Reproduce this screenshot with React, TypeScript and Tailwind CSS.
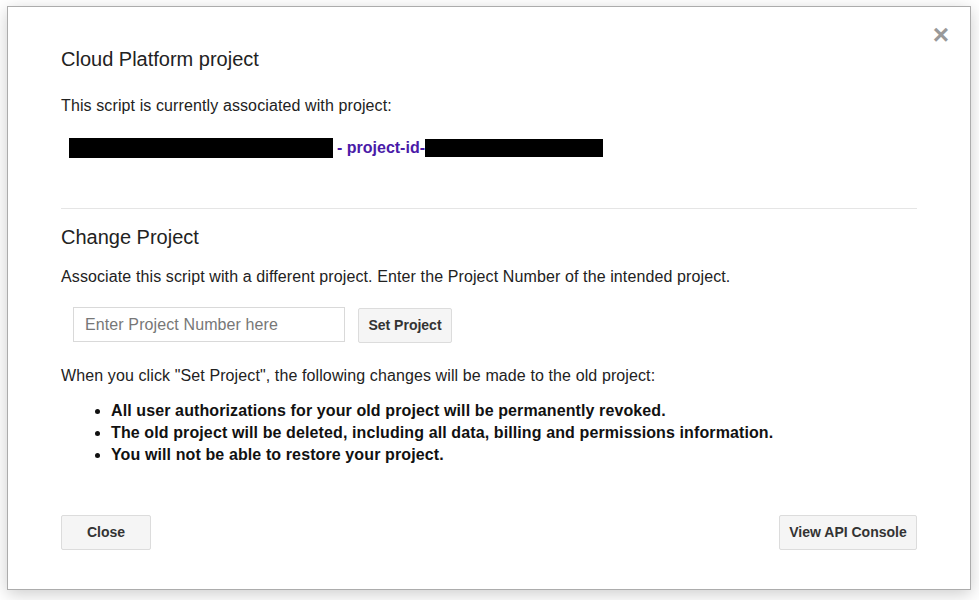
import React from "react";

const bullets = [
  "All user authorizations for your old project will be permanently revoked.",
  "The old project will be deleted, including all data, billing and permissions information.",
  "You will not be able to restore your project.",
];

const App: React.FC = () => {
  return (
    <div className="min-h-[600px] bg-white pl-[7px] pt-[6px] font-['Liberation_Sans',Arial,sans-serif] text-[#222]">
      <div className="relative h-[584px] w-[964px] border border-[#acacac] bg-white px-[53px] pt-[40px] shadow-[0_4px_16px_rgba(0,0,0,0.2)]">
        {/* close icon */}
        <button className="absolute right-[21px] top-[14px] text-[28px] leading-[28px] font-bold text-[#999]">
          ×
        </button>

        <h2 className="text-[20px] leading-[24px]">Cloud Platform project</h2>
        <p className="mt-[25px] text-[16px] leading-[20px] tracking-[0.11px]">This script is currently associated with project:</p>
        <div className="mt-[22px] ml-[8px] flex items-center">
          <span className="h-[20px] w-[264px] bg-black" />
          <span className="pl-[4px] text-[16px] leading-[20px] font-bold text-[#4a1aa8]">- project-id-</span>
          <span className="h-[18px] w-[178px] bg-black" />
        </div>

        <div className="mt-[50px] border-t border-[#e5e5e5]" />

        <h2 className="mt-[16px] text-[20px] leading-[24px]">Change Project</h2>
        <p className="mt-[18px] text-[16px] leading-[20px] tracking-[0.11px]">
          Associate this script with a different project. Enter the Project Number of the intended project.
        </p>
        <div className="mt-[20px] ml-[12px] flex items-start gap-[13px]">
          <input
            className="h-[35px] w-[272px] border border-[#d9d9d9] px-[11px] text-[16px] tracking-[0.11px] text-[#222] placeholder:text-[#777] outline-none"
            placeholder="Enter Project Number here"
          />
          <button className="mt-[1px] h-[35px] w-[94px] rounded-[2px] border border-[#dcdcdc] bg-[#f5f5f5] text-[14px] font-bold text-[#333]">
            Set Project
          </button>
        </div>

        <p className="mt-[23px] text-[16px] leading-[20px] tracking-[0.11px]">
          When you click "Set Project", the following changes will be made to the old project:
        </p>
        <ul className="mt-[14px] list-disc pl-[50px] text-[16px] leading-[22px] font-bold tracking-[0.11px] text-[#111]">
          {bullets.map((b) => (
            <li key={b}>{b}</li>
          ))}
        </ul>

        <div className="mt-[49px] flex justify-between">
          <button className="h-[35px] w-[90px] rounded-[2px] border border-[#dcdcdc] bg-[#f5f5f5] text-[14px] font-bold text-[#333]">
            Close
          </button>
          <button className="h-[35px] w-[138px] rounded-[2px] border border-[#dcdcdc] bg-[#f5f5f5] text-[14px] font-bold text-[#333]">
            View API Console
          </button>
        </div>
      </div>
    </div>
  );
};

export default App;
